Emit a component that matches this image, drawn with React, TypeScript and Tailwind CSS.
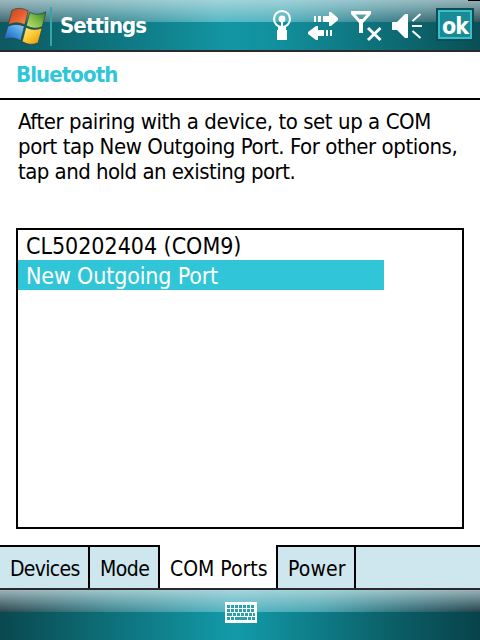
import React from "react";

const font = "font-['DejaVu_Sans_Condensed','DejaVu_Sans',sans-serif] [font-stretch:condensed]";

function WindowsFlag() {
  return (
    <svg width="44" height="42" viewBox="0 0 42 40" className="block">
      <defs>
        <linearGradient id="red" x1="0" y1="0" x2="1" y2="1">
          <stop offset="0" stopColor="#b9452a" />
          <stop offset=".55" stopColor="#e9602c" />
          <stop offset="1" stopColor="#f79a4c" />
        </linearGradient>
        <linearGradient id="green" x1="0" y1="1" x2="1" y2="0">
          <stop offset="0" stopColor="#c4e37c" />
          <stop offset=".5" stopColor="#7fbb45" />
          <stop offset="1" stopColor="#2f7a2c" />
        </linearGradient>
        <linearGradient id="blue" x1="1" y1="0" x2="0" y2="1">
          <stop offset="0" stopColor="#8fd0f5" />
          <stop offset=".5" stopColor="#3f93dc" />
          <stop offset="1" stopColor="#1d58ad" />
        </linearGradient>
        <linearGradient id="yellow" x1="0" y1="0" x2="1" y2="1">
          <stop offset="0" stopColor="#fff08a" />
          <stop offset=".5" stopColor="#fdc62f" />
          <stop offset="1" stopColor="#d88d17" />
        </linearGradient>
      </defs>
      <g stroke="#233b3d" strokeWidth=".6">
        <path d="M9.500 5Q16 1 25 5.500L21.800 18.700Q13 15 6 19Z" fill="url(#red)" />
        <path d="M26.500 7Q34 11 42 6.500L38.500 20.500Q31 24 23.200 19.700Z" fill="url(#green)" />
        <path d="M5.700 20.200Q13 16.800 21.300 20.200L18 34Q10 29.500 1.500 33Z" fill="url(#blue)" />
        <path d="M22.800 21.200Q30 25 38.200 22L34.500 36Q27 39.500 19.300 34.900Z" fill="url(#yellow)" />
      </g>
    </svg>
  );
}

function StatusIcons() {
  return (
    <svg width="155" height="40" viewBox="270 5 155 40" className="block" fill="white">
      <circle cx="282" cy="19" r="8" fill="none" stroke="white" strokeWidth="2.100" />
      <circle cx="282" cy="19" r="3.400" />
      <path d="M281 20h2v6h3v4h1v10h-10V30h1v-4h3z" />
      <path d="M314 16h2v6h-2zM318 16h3v6h-3zM323 16h6v-4h2l7 6v2l-7 6h-2v-4h-6z" />
      <path d="M330 30h2v6h-2zM326 30h2v6h-2zM324 30h-6v-4h-2l-8 6v2l8 6h2v-4h6z" />
      <path d="M351 11h20v3L363 23V33h-4V23L351 14zM355.500 14.500l4 4.500h3l4-4.500z" fillRule="evenodd" />
      <path d="M368 28l12.500 12M380.500 28l-12.500 12" stroke="white" strokeWidth="3" />
      <path d="M392 22h5l8-8h3v24h-3l-8-8h-5z" />
      <path d="M412.500 21l8-7M412 26h10M412.500 31l8 7" stroke="white" strokeWidth="2" />
    </svg>
  );
}

function Keyboard() {
  const rows = [
    { y: 3, xs: [2, 6, 10, 14, 18, 22, 26], w: 3 },
    { y: 7, xs: [2, 6, 10, 14, 18, 22, 26], w: 3 },
    { y: 11, xs: [2, 8, 12, 16, 20, 24], w: 3 },
  ];
  return (
    <svg width="32" height="21" viewBox="0 0 32 21" className="block" shapeRendering="crispEdges">
      <rect width="32" height="21" rx="1" fill="white" />
      <g fill="#2aa0ad">
        {rows.map((r) => r.xs.map((x) => <rect key={`${r.y}-${x}`} x={x} y={r.y} width={r.w} height="3" />))}
        <rect x="5" y="11" width="2" height="3" />
        <rect x="28" y="11" width="2" height="3" />
        <rect x="2" y="15" width="3" height="3" />
        <rect x="6" y="15" width="3" height="3" />
        <rect x="10" y="15" width="12" height="3" />
        <rect x="23" y="15" width="3" height="3" />
        <rect x="27" y="15" width="3" height="3" />
      </g>
    </svg>
  );
}

export default function App() {
  return (
    <div className={`relative flex h-[640px] w-[480px] flex-col overflow-hidden bg-white text-black ${font}`}>
      <div className="absolute top-0 right-0 h-px w-[12px] bg-black" />
      <header className="flex h-[52px] shrink-0 items-start border-b-2 border-[#2a2a2c] bg-[linear-gradient(to_bottom,rgba(200,225,230,0.65)_0px,rgba(190,220,226,0.5)_7px,rgba(150,200,206,0)_22px),linear-gradient(to_right,#44686e_0px,#3f8790_90px,#55b9c5_220px,#50b3bf_280px,#3d808a_390px,#33555b_480px),linear-gradient(to_right,#0c5960_0px,#0d6c75_80px,#1396a4_230px,#128f9c_280px,#0d6c75_390px,#0a4f56_480px)] bg-[length:100%_22px,100%_22px,100%_100%] bg-no-repeat text-white">
        <div className="mt-[5px] ml-[2px] w-[48px]"><WindowsFlag /></div>
        <div className="mt-[7px] h-[39px] w-[2px] bg-[#3aa3aa]" />
        <h1 className="ml-[8px] mt-[11px] w-[210px] whitespace-nowrap text-[22px] leading-[30px] font-bold tracking-[-0.9px]">Settings</h1>
        <div className="mt-[5px] w-[155px]"><StatusIcons /></div>
        <button className="ml-[11px] mt-[8px] flex h-[33px] w-[38px] items-center justify-center border-2 border-[#0a4d55] bg-[#1a8b96] pt-[2px] shadow-[inset_0_0_0_2px_#38bfcb] text-[23px] leading-[28px] font-bold tracking-[-1px]">ok</button>
      </header>
      <h2 className="h-[46px] shrink-0 pt-[8px] pl-[16px] text-[22px] leading-[30px] font-bold tracking-[-0.9px] text-[#31c6d7]">Bluetooth</h2>
      <div className="h-[2px] shrink-0 bg-black" />
      <p className="h-[128px] shrink-0 pt-[9px] pl-[18px] whitespace-nowrap text-[22px] leading-[25px] tracking-[-0.44px]">
        After pairing with a device, to set up a COM<br />
        port tap New Outgoing Port. For other options,<br />
        <span className="tracking-[-0.53px]">tap and hold an existing port.</span>
      </p>
      <div className="mx-[16px] h-[301px] shrink-0 border-2 border-black text-[23px] leading-[33px]">
        <div className="h-[30px] pl-[8px] tracking-[-0.02px]">CL50202404 (COM9)</div>
        <div className="h-[30px] w-[366px] bg-[#31c6d7] pl-[8px] text-white tracking-[-0.15px]">New Outgoing Port</div>
      </div>
      <nav className="mt-[16px] flex h-[43px] shrink-0 text-[21px] leading-[45px] whitespace-nowrap">
        <div className="w-[90px] border-t-2 border-r-2 border-black bg-[#cee6ed] pl-[10px] tracking-[-0.7px]">Devices</div>
        <div className="w-[70px] border-t-2 border-r-2 border-black bg-[#cee6ed] pl-[10px] tracking-[-0.5px]">Mode</div>
        <div className="w-[116px] pt-[2px] pl-[10px] tracking-[0px]">COM Ports</div>
        <div className="w-[80px] border-t-2 border-x-2 border-black bg-[#cee6ed] pl-[10px] tracking-[0.1px]">Power</div>
        <div className="flex-1 border-t-2 border-black bg-[#cee6ed]" />
      </nav>
      <footer className="flex h-[52px] shrink-0 items-start justify-center border-t-2 border-[#2a2a2c] bg-[linear-gradient(to_bottom,rgba(200,225,230,0.7)_0px,rgba(190,220,226,0.5)_7px,rgba(150,200,206,0)_22px),linear-gradient(to_right,#2d474c_0px,#3f8790_110px,#55b9c5_235px,#4aa5b0_320px,#35737c_400px,#24424a_480px),linear-gradient(to_right,#0a484f_0px,#0d6c75_100px,#139baa_235px,#0e7b86_320px,#0b5c64_400px,#08434a_480px)] bg-[length:100%_22px,100%_22px,100%_100%] bg-no-repeat pt-[12px]">
        <div className="ml-[2px]"><Keyboard /></div>
      </footer>
    </div>
  );
}
